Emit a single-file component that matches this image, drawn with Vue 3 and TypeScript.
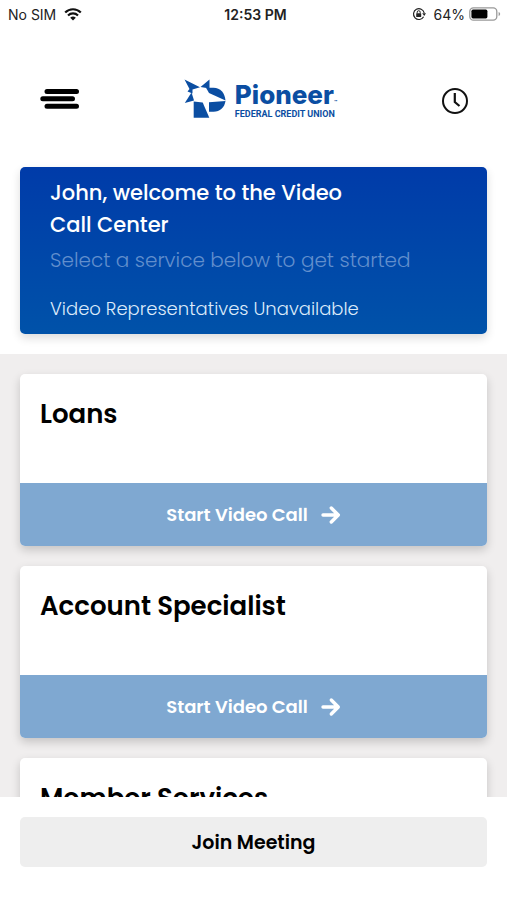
<script setup lang="ts">
interface Service {
  id: string
  name: string
}

const services: Service[] = [
  { id: 'loans', name: 'Loans' },
  { id: 'account', name: 'Account Specialist' },
  { id: 'member', name: 'Member Services' },
]
</script>

<template>
  <div class="screen">
    <div class="status">
      <div class="status-side">
        <span>No SIM</span>
        <svg width="18" height="13" viewBox="0 0 18 13" aria-hidden="true">
          <path d="M1.2 4.5a11 11 0 0 1 15.6 0" fill="none" stroke="#111" stroke-width="2.2" />
          <path d="M4 7.5a7 7 0 0 1 10 0" fill="none" stroke="#111" stroke-width="2.1" />
          <path d="M6.2 9.8a4 4 0 0 1 5.6 0L9 12.6z" fill="#111" />
        </svg>
      </div>
      <span class="time">12:53 PM</span>
      <div class="status-side end">
        <svg width="14" height="14" viewBox="0 0 14 14" aria-hidden="true">
          <path d="M11.6 9.8A5.4 5.4 0 1 1 12.2 6" fill="none" stroke="#222" stroke-width="1.2" />
          <path d="M10.2 6.2h3.8L12.2 9z" fill="#222" />
          <rect x="4.2" y="6.2" width="5" height="3.8" rx=".5" fill="#222" />
          <path d="M5.2 6.4V5.2a1.5 1.5 0 0 1 3 0v1.2" fill="none" stroke="#222" />
        </svg>
        <span class="percent">64%</span>
        <svg width="32" height="14" viewBox="0 0 32 14" aria-hidden="true">
          <rect x=".8" y=".8" width="27" height="12.4" rx="3.6" fill="#fff" stroke="#999" stroke-width="1.3" />
          <rect x="2.4" y="2.6" width="16" height="8.8" rx="1.6" fill="#000" />
          <path d="M29.6 5v4q1.6-.6 1.6-2t-1.6-2z" fill="#999" />
        </svg>
      </div>
    </div>

    <header class="header">
      <button class="icon-button" type="button" aria-label="Menu">
        <svg width="40" height="22" viewBox="0 0 40 22">
          <path d="M7 3.5h29.5M2.8 10.8H32.5M7 18.2h29.5" fill="none" stroke="#000" stroke-width="5" stroke-linecap="round" />
        </svg>
      </button>
      <div class="logo">
        <svg width="42" height="40" viewBox="0 0 42 40" aria-hidden="true">
          <g fill="#0b4ea2">
            <path d="M.5 .5L16 8.2 8.5 10.5V14.5L3.500 12.500 5.500 10z" />
            <path d="M25.500 .500v9L16.500 8z" />
            <path d="M7.500 13.500L10 21.500 .800 24z" />
            <path d="M9.700 22.500l9 1L25.300 38.800H9.700z" />
            <path d="M22 8.800h7.500c7 0 11.200 5 12 12.700L25 14z" />
            <path d="M25 23.200l16.500-1.200C40.500 28.500 36 32.700 29.500 32.700H25z" />
          </g>
        </svg>
        <div class="logo-text">
          <span class="brand">Pioneer<small>™</small></span>
          <span class="tagline">FEDERAL CREDIT UNION</span>
        </div>
      </div>
      <button class="icon-button history" type="button" aria-label="History">
        <svg width="28" height="28" viewBox="0 0 28 28" fill="none" stroke="#111" stroke-width="2">
          <circle cx="14" cy="14" r="12" />
          <path d="M13.800 6v9l4.700 4" stroke-width="2.200" />
        </svg>
      </button>
    </header>

    <section class="welcome">
      <h1>John, welcome to the Video Call Center</h1>
      <p class="hint">Select a service below to get started</p>
      <p class="notice">Video Representatives Unavailable</p>
    </section>

    <main class="services">
      <article v-for="service in services" :key="service.id" class="card">
        <h2>{{ service.name }}</h2>
        <button class="call" type="button">
          <span>Start Video Call</span>
          <svg width="20" height="20" viewBox="0 0 20 20" aria-hidden="true">
            <path d="M2 10h15M10.300 3l7 7-7 7" fill="none" stroke="#fff" stroke-width="3.400" stroke-linecap="round" stroke-linejoin="round" />
          </svg>
        </button>
      </article>
    </main>

    <footer class="footer">
      <button class="join" type="button">Join Meeting</button>
    </footer>
  </div>
</template>

<style>
body {
  margin: 0;
}
</style>

<style scoped>
.screen {
  box-sizing: border-box;
  display: flex;
  flex-direction: column;
  height: 100vh;
  overflow: hidden;
  background: #fff;
  color: #000;
  font-family: Poppins, Inter, "Liberation Sans", sans-serif;
}

button {
  border: 0;
  padding: 0;
  font-family: inherit;
  cursor: pointer;
}

svg {
  display: block;
  flex: none;
}

.status {
  display: grid;
  grid-template-columns: 1fr auto 1fr;
  align-items: center;
  height: 28px;
  padding: 0 6px 0 8px;
  font-family: Inter, "Liberation Sans", sans-serif;
  font-size: 14px;
  color: #222;
}

.status-side {
  display: flex;
  align-items: center;
  gap: 8px;
}

.end {
  justify-content: flex-end;
  gap: 4px;
}

.percent {
  padding-left: 4px;
}

.time {
  padding-left: 2px;
  font-weight: 600;
}

.header {
  display: flex;
  align-items: center;
  justify-content: space-between;
  padding: 51px 38px 48px 40px;
}

.icon-button {
  background: none;
}

.history {
  padding-top: 4px;
}

.logo {
  display: flex;
  align-items: center;
  gap: 9px;
  height: 40px;
  color: #0b4ea2;
}

.logo-text {
  display: flex;
  flex-direction: column;
  gap: 2px;
  padding-top: 4px;
}

.brand {
  font-family: Inter, "Liberation Sans", sans-serif;
  font-size: 26px;
  font-weight: 800;
  line-height: 24px;
}

.brand small {
  font-size: 5px;
  line-height: 0;
}

.tagline {
  font-family: Roboto, "Liberation Sans", sans-serif;
  font-size: 9px;
  font-weight: 700;
  line-height: 10px;
}

.welcome {
  margin: 0 20px 20px;
  padding: 10px 30px 9px;
  border-radius: 5px;
  background: linear-gradient(#003ba9, #0052a9);
  box-shadow: 0 4px 10px rgba(0, 0, 0, 0.14);
  color: #fff;
}

.welcome h1 {
  max-width: 320px;
  margin: 0;
  font-size: 21px;
  font-weight: 500;
  line-height: 32px;
}

.hint {
  margin: 0;
  padding: 3px 0;
  font-size: 20px;
  font-weight: 300;
  line-height: 32px;
  color: #628fcd;
}

.notice {
  margin: 0;
  padding-top: 14px;
  font-size: 18px;
  font-weight: 300;
  line-height: 32px;
  color: #dceafa;
}

.services {
  flex: 1;
  min-height: 0;
  overflow: hidden;
  display: flex;
  flex-direction: column;
  gap: 20px;
  padding: 20px 20px 0;
  background: #f0eeee;
}

.card {
  flex: none;
  border-radius: 5px;
  background: #fff;
  box-shadow: 0 4px 10px rgba(0, 0, 0, 0.18);
}

.card h2 {
  margin: 0;
  padding: 22px 20px 51px;
  font-size: 26px;
  font-weight: 600;
  line-height: 36px;
}

.call {
  display: flex;
  align-items: center;
  justify-content: center;
  gap: 13px;
  width: 100%;
  height: 63px;
  border-radius: 0 0 5px 5px;
  background: #7fa8d1;
  color: #fff;
  font-size: 18px;
  font-weight: 600;
}

.footer {
  padding: 20px 20px 33px;
  background: #fff;
}

.join {
  display: block;
  width: 100%;
  height: 50px;
  border-radius: 5px;
  background: #eee;
  color: #000;
  font-size: 19px;
  font-weight: 600;
}
</style>
